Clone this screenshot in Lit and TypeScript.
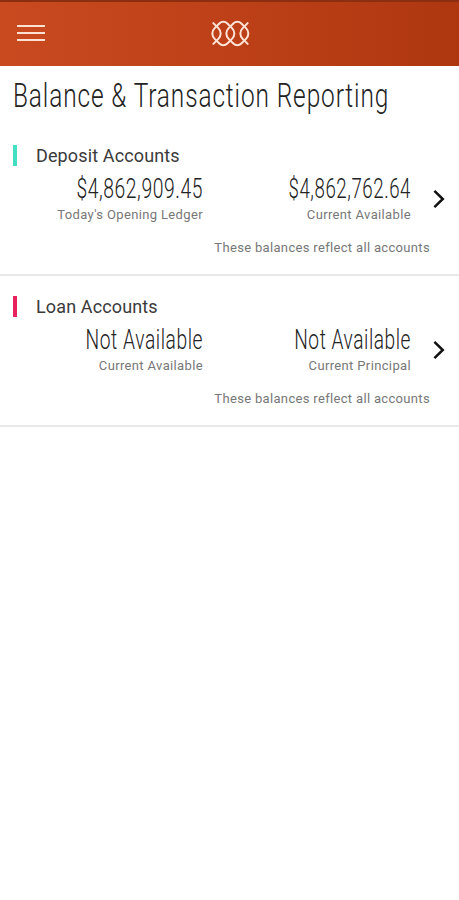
import { LitElement, html, css } from "lit";
import { customElement, property } from "lit/decorators.js";
import { styleMap } from "lit/directives/style-map.js";

interface Balance { value: string; label: string; stretch: number }

@customElement("account-group")
class AccountGroup extends LitElement {
  @property() heading = "";
  @property() accent = "";
  @property({ attribute: false }) balances: Balance[] = [];

  static styles = css`
    :host { display: block; box-sizing: border-box; height: 151px; padding-top: 19px; border-bottom: 2px solid #e8e8e8; }
    .head { display: flex; align-items: center; height: 24px; padding-left: 13px; }
    .bar { width: 4px; height: 21px; }
    .name { margin-left: 19px; font-size: 18px; letter-spacing: 0.13px; color: #3a3a3a; white-space: nowrap; }
    .row { display: grid; grid-template-columns: 203px 208px 1fr; height: 63px; padding-top: 4.5px; box-sizing: border-box; }
    .cell { display: flex; flex-direction: column; align-items: flex-end; white-space: nowrap; }
    .value { font-size: 27px; line-height: 32px; font-weight: 300; letter-spacing: 0.8px; color: #222; transform-origin: right center; margin-top: 1px; }
    .label { font-size: 13px; line-height: 16px; color: #777; margin-top: 2px; letter-spacing: 0.36px; }
    .arrow { display: block; width: 12px; height: 20px; margin: 17px 0 0 22px; }
    .note { font-size: 13px; line-height: 16px; color: #777; text-align: right; padding-right: 29px; margin-top: 9.5px; letter-spacing: 0.33px; }
  `;

  render() {
    return html`
      <div class="head">
        <span class="bar" style=${styleMap({ background: this.accent })}></span>
        <span class="name">${this.heading}</span>
      </div>
      <div class="row">
        ${this.balances.map((b) => html`
          <div class="cell">
            <span class="value" style=${styleMap({ transform: `scaleX(${b.stretch})` })}>${b.value}</span>
            <span class="label">${b.label}</span>
          </div>`)}
        <svg class="arrow" viewBox="0 0 12 20" fill="none" stroke="#111" stroke-width="2.5">
          <path d="M1.4 1.8 9.8 10 1.4 18.2" />
        </svg>
      </div>
      <div class="note">These balances reflect all accounts</div>
    `;
  }
}

@customElement("app-root")
class AppRoot extends LitElement {
  static styles = css`
    :host { display: block; min-height: 900px; background: #fff; font-family: Roboto, "Liberation Sans", sans-serif; overflow: hidden; }
    header { box-sizing: border-box; height: 65.5px; display: grid; grid-template-columns: 1fr auto 1fr; align-items: center;
      border-top: 2px solid #8c2f10; background: linear-gradient(90deg, #c94a1f, #bd4018 50%, #ae3710) border-box;
      padding: 0 17px 1px; }
    .menu { display: flex; flex-direction: column; gap: 5px; width: 28px; }
    .line { height: 2px; background: #ffe1d4; }
    .logo { display: block; width: 39px; height: 27px; margin-left: 1px; }
    h1 { margin: 10px 0 0 13px; height: 43px; line-height: 40px; font-size: 33px; font-weight: 300; letter-spacing: 1.2px; color: #222;
      white-space: nowrap; transform: scaleX(0.74); transform-origin: left center; width: max-content; }
    main { padding-top: 6px; }
  `;

  render() {
    return html`
      <header>
        <div class="menu"><span class="line"></span><span class="line"></span><span class="line"></span></div>
        <svg class="logo" viewBox="33 60 117 80" fill="none" stroke="#ffe3d6" stroke-width="6" stroke-linecap="round" stroke-linejoin="round">
          <path d="M70 65Q77 65 82 70L96 84Q103 91 103 100T96 116L82 130Q77 135 70 135T58 130L44 116Q37 109 37 100T44 84L58 70Q63 65 70 65Z" />
          <path d="M112 65Q119 65 124 70L138 84Q145 91 145 100T138 116L124 130Q119 135 112 135T100 130L86 116Q79 109 79 100T86 84L100 70Q105 65 112 65Z" />
          <path d="M40 69 55 84Q62 91 62 100T55 116L40 131M143 69 128 84Q121 91 121 100T128 116L143 131" />
        </svg>
      </header>
      <h1>Balance &amp; Transaction Reporting</h1>
      <main>
        <account-group heading="Deposit Accounts" accent="#43dfc4" .balances=${[
          { value: "$4,862,909.45", label: "Today's Opening Ledger", stretch: 0.715 },
          { value: "$4,862,762.64", label: "Current Available", stretch: 0.692 },
        ]}></account-group>
        <account-group heading="Loan Accounts" accent="#e8215f" .balances=${[
          { value: "Not Available", label: "Current Available", stretch: 0.712 },
          { value: "Not Available", label: "Current Principal", stretch: 0.708 },
        ]}></account-group>
      </main>
    `;
  }
}
